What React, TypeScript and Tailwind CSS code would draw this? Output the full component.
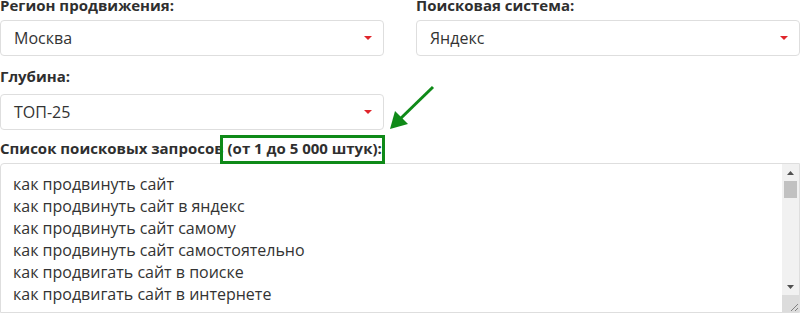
import React from "react";

const Caret = () => (
  <svg width="8" height="4" viewBox="0 0 8 4" className="shrink-0">
    <polygon points="0,0 8,0 4,4" fill="#e0252b" />
  </svg>
);

const Select = ({ value }: { value: string }) => (
  <div className="flex h-[36px] items-center justify-between rounded-[4px] border border-[#dedede] bg-white pl-[13px] pr-[11px] text-[16px] leading-[22px] text-[#333]">
    <span>{value}</span>
    <Caret />
  </div>
);

const Label = ({ children, className = "" }: { children: React.ReactNode; className?: string }) => (
  <div className={`text-[15px] font-bold leading-[20px] text-[#2f2f2f] ${className}`}>{children}</div>
);

const lines = [
  "как продвинуть сайт",
  "как продвинуть сайт в яндекс",
  "как продвинуть сайт самому",
  "как продвинуть сайт самостоятельно",
  "как продвигать сайт в поиске",
  "как продвигать сайт в интернете",
];

export default function App() {
  return (
    <div
      className="relative h-[313px] w-[800px] overflow-hidden bg-white"
      style={{ fontFamily: '"Open Sans", "Liberation Sans", sans-serif' }}
    >
      <div className="-mt-[5px]">
        <div className="grid grid-cols-2 gap-x-8">
          <div>
            <Label className="mb-[5px]">Регион продвижения:</Label>
            <Select value="Москва" />
          </div>
          <div>
            <Label className="mb-[5px]">Поисковая система:</Label>
            <Select value="Яндекс" />
          </div>
        </div>
        <div className="mt-[10px] w-[384px]">
          <Label className="mb-[8px]">Глубина:</Label>
          <Select value="ТОП-25" />
        </div>
        <Label className="mb-[5px] mt-[8px]">Список поисковых запросов (от 1 до 5 000 штук):</Label>
        <div className="flex h-[150px] rounded-tl-[4px] border border-[#dedede] bg-white">
          <div className="flex-1 overflow-hidden pl-[12px] pt-[9px] text-[16px] leading-[22px] text-[#333]">
            {lines.map((l) => (
              <div key={l}>{l}</div>
            ))}
          </div>
          <div className="flex w-[17px] flex-col bg-[#f1f1f1]">
            <div className="flex h-[17px] items-center justify-center">
              <svg width="7" height="4" viewBox="0 0 7 4">
                <polygon points="0,4 7,4 3.5,0" fill="#505050" />
              </svg>
            </div>
            <div className="mx-[2px] h-[17px] bg-[#c1c1c1]" />
            <div className="flex-1" />
            <div className="flex h-[17px] items-center justify-center">
              <svg width="7" height="4" viewBox="0 0 7 4">
                <polygon points="0,0 7,0 3.5,4" fill="#505050" />
              </svg>
            </div>
            <div className="flex h-[17px] items-end justify-end bg-[#dcdcdc]">
              <svg width="17" height="17" viewBox="0 0 17 17">
                <line x1="16" y1="9" x2="9" y2="16" stroke="#808080" strokeWidth="1" />
                <line x1="16" y1="13" x2="13" y2="16" stroke="#808080" strokeWidth="1" />
              </svg>
            </div>
          </div>
        </div>
      </div>

      <div className="pointer-events-none absolute left-[220px] top-[135px] h-[29px] w-[165px] border-[3px] border-[#0f8a18]" />
      <svg className="pointer-events-none absolute left-0 top-0" width="800" height="313">
        <line x1="433" y1="87" x2="399" y2="120" stroke="#0f8a18" strokeWidth="3" />
        <polygon points="390,129 395,111 408,124" fill="#0f8a18" />
      </svg>
    </div>
  );
}
